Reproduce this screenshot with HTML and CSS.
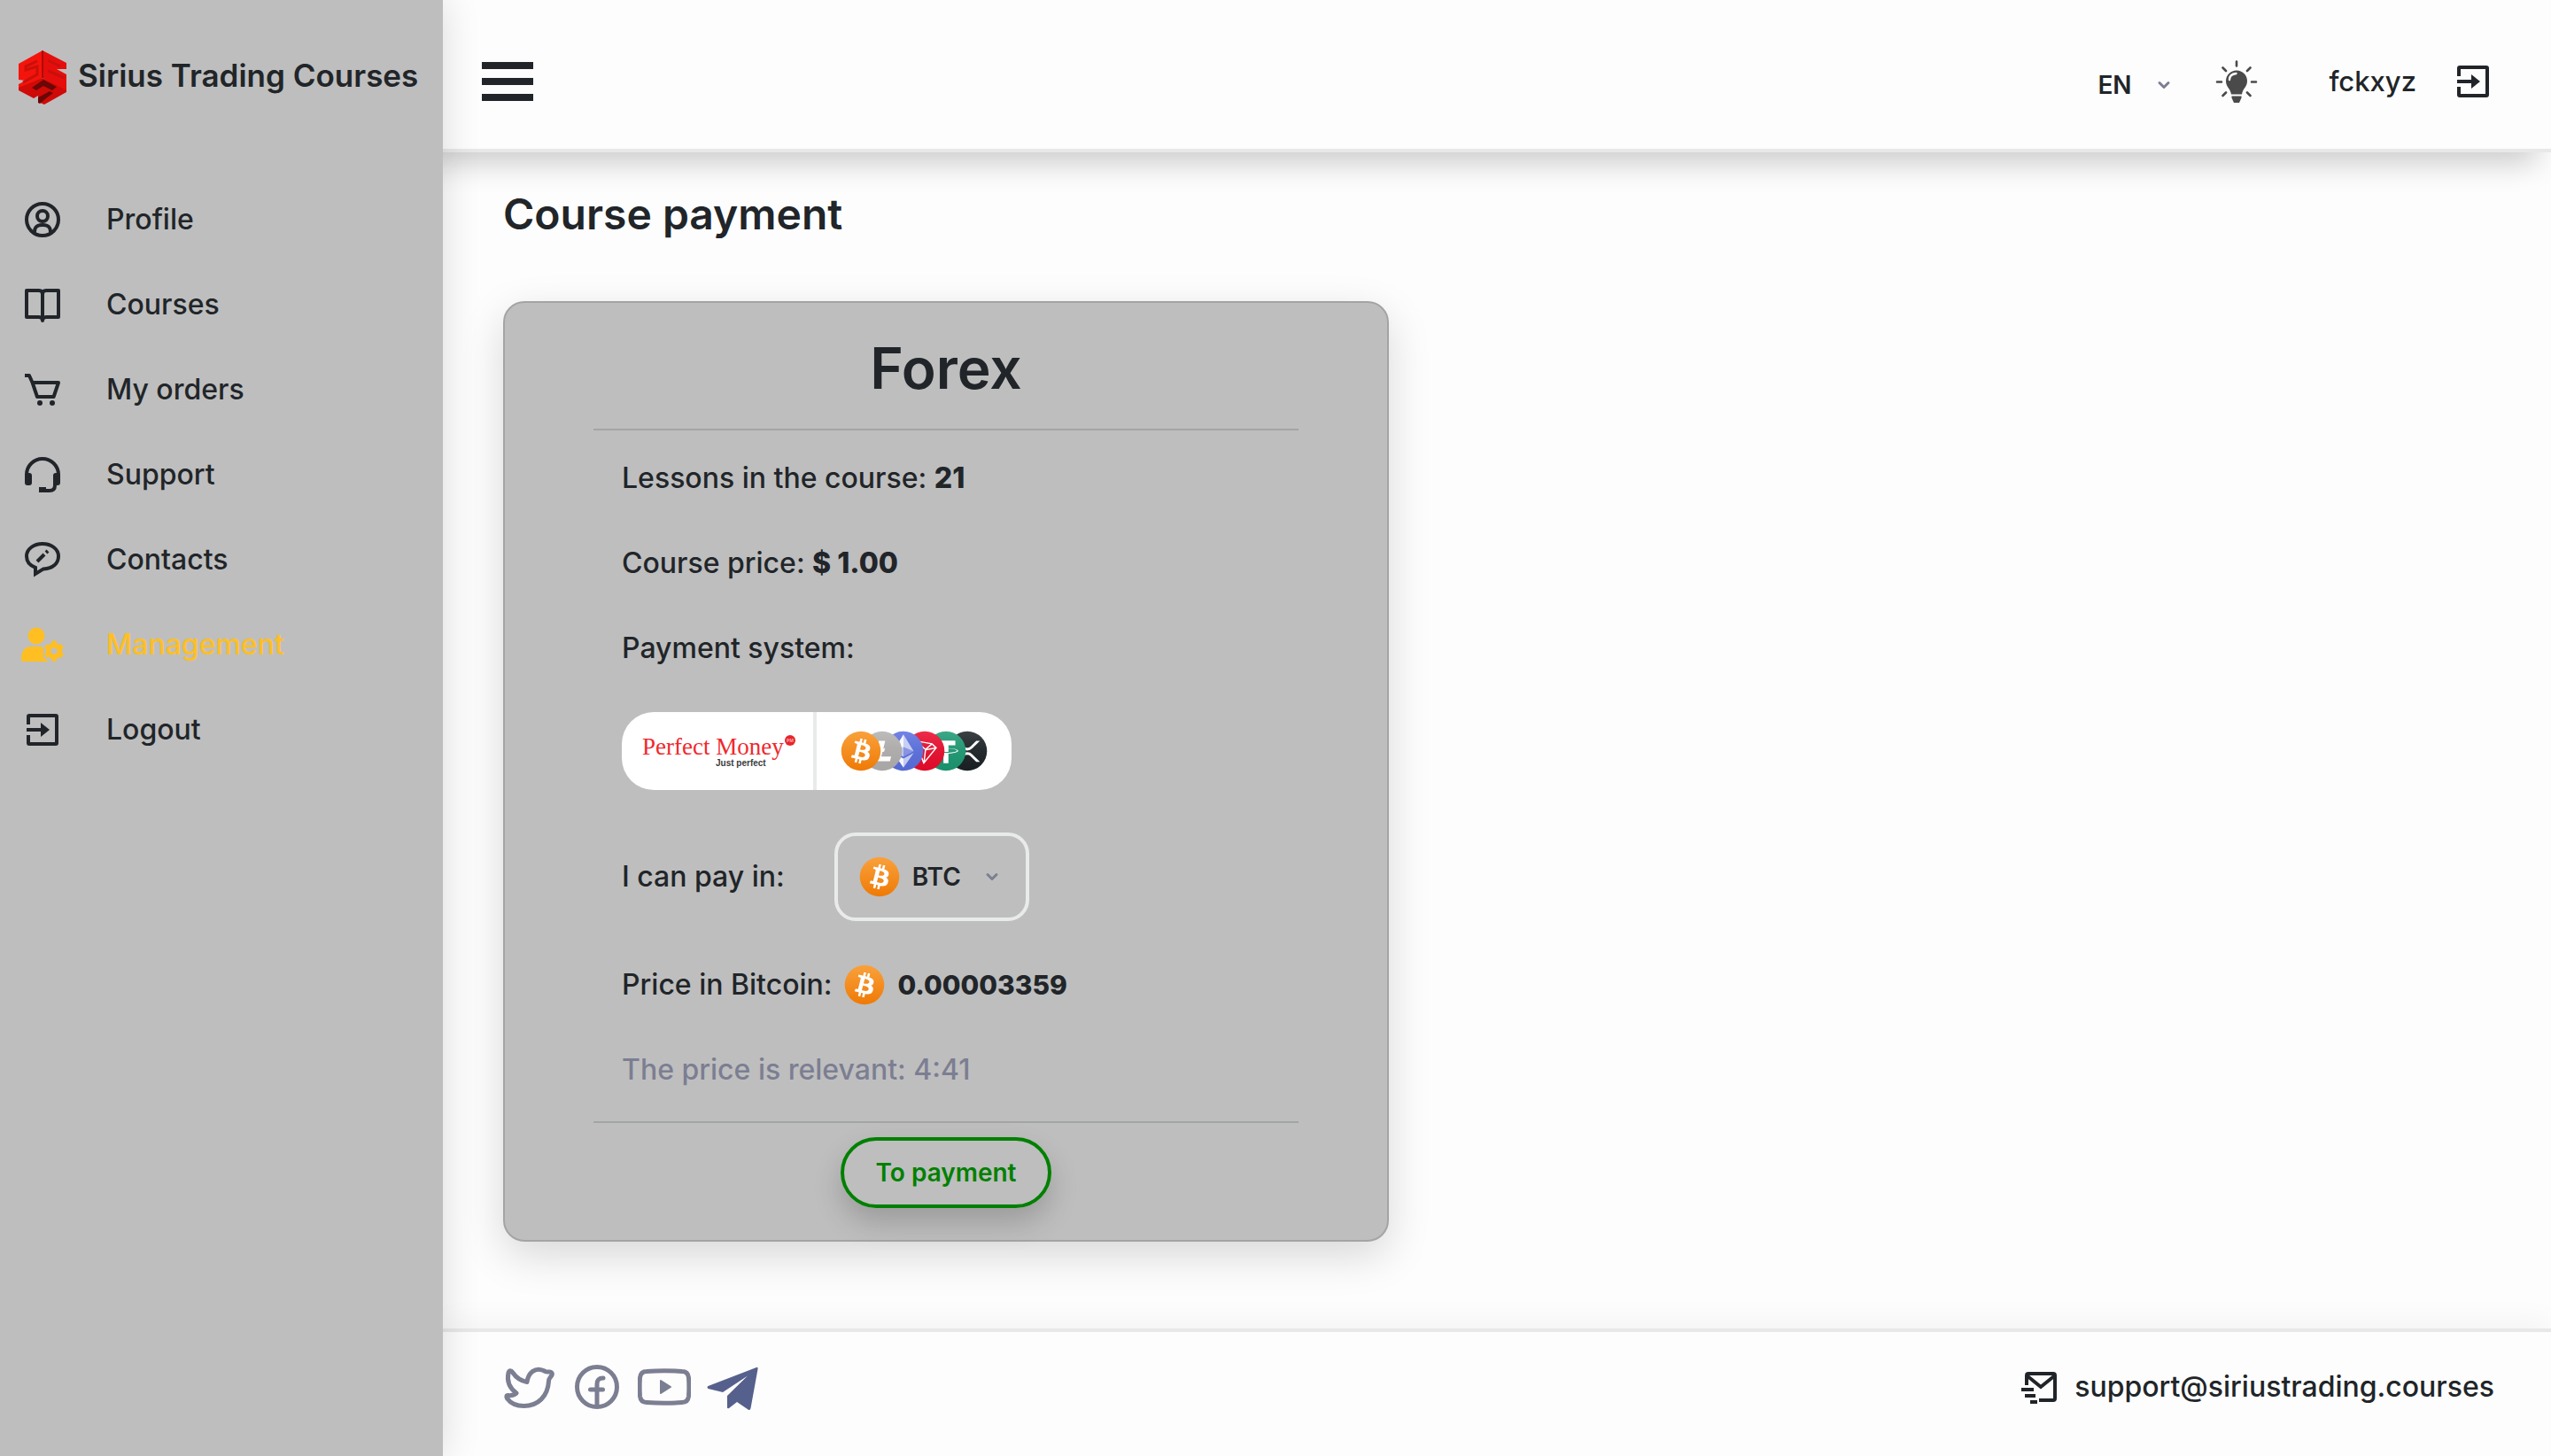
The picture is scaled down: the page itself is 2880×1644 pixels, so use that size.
FILE: index.html
```html
<!DOCTYPE html>
<html lang="en">
<head>
<meta charset="utf-8">
<title>Sirius Trading Courses</title>
<meta name="viewport" content="width=device-width, initial-scale=1">
<link rel="stylesheet" href="styles.css">
</head>
<body>
<svg class="sprite" aria-hidden="true">
  <defs>
    <linearGradient id="orange" x1="0" y1="0" x2="0" y2="1"><stop offset="0" stop-color="#f9a13c"/><stop offset="1" stop-color="#ef7a05"/></linearGradient>
    <linearGradient id="shade" x1="0" y1="0" x2="0" y2="1"><stop offset="0" stop-color="#fff" stop-opacity=".14"/><stop offset="1" stop-color="#000" stop-opacity=".06"/></linearGradient>
    <symbol id="btc" viewBox="0 0 32 32"><circle cx="16" cy="16" r="15.5" fill="url(#orange)"/><path fill="#fff" d="M23.189 14.02c.314-2.096-1.283-3.223-3.465-3.975l.708-2.84-1.728-.43-.69 2.765c-.454-.114-.92-.22-1.385-.326l.695-2.783L15.596 6l-.708 2.839c-.376-.086-.746-.17-1.104-.26l.002-.009-2.384-.595-.46 1.846s1.283.294 1.256.312c.7.175.826.638.805 1.006l-.806 3.235c.048.012.11.03.18.057l-.183-.045-1.13 4.532c-.086.212-.303.531-.793.41.018.025-1.256-.313-1.256-.313l-.858 1.978 2.25.561c.418.105.828.215 1.231.318l-.715 2.872 1.727.43.708-2.84c.472.127.93.245 1.378.357l-.706 2.828 1.728.43.715-2.866c2.948.558 5.164.333 6.097-2.333.752-2.146-.037-3.385-1.588-4.192 1.13-.26 1.98-1.003 2.207-2.538zm-3.95 5.538c-.533 2.147-4.148.986-5.32.695l.95-3.805c1.172.293 4.929.872 4.37 3.11zm.535-5.569c-.487 1.953-3.495.96-4.47.717l.86-3.45c.975.243 4.118.696 3.61 2.733z"/></symbol>
    <symbol id="exit" viewBox="0 0 24 24"><path fill="none" stroke="currentColor" stroke-width="2" d="M4 9V4.500Q4 4 4.500 4H19.500Q20 4 20 4.500V19.500Q20 20 19.500 20H4.500Q4 20 4 19.500V15"/><path fill="currentColor" d="M3 11h8V8l5 4-5 4v-3H3z"/></symbol>
    <symbol id="chevron" viewBox="0 0 16 10"><path fill="none" stroke="currentColor" stroke-width="3" stroke-linecap="round" stroke-linejoin="round" d="M3 2.500l5 5 5-5"/></symbol>
  </defs>
</svg>

<div class="app">
  <aside class="sidebar">
    <a class="brand" href="#">
      <svg class="brand-logo" viewBox="-1 0 56 62" aria-hidden="true">
        <path fill="#f4140b" d="M27 0v31L7 42l-7 0v-4l8-4-8-1V15z"/>
        <path fill="#e60e0c" d="M27 0l27 14v7l-11 0 11 6v20L27 31z"/>
        <path fill="#cf0a07" d="M27 31l27 14v2L29 61l-7-3v-7l-5 3L0 45v-3z"/>
        <path fill="none" stroke="#c9100b" stroke-width="3" d="M21 12L8 18v4l13-4v9L5 36M33 11l14 7M33 23l19 8"/>
        <path fill="#6b0705" d="M15 42l13-9 15 8-5 4-10-5-8 5zM26 51l9-5 4 2-8 6-7 6-2-1v-6z"/>
        <path stroke="#6d0906" stroke-width="1" d="M27 0v31"/>
      </svg>
      <span>Sirius Trading Courses</span>
    </a>
    <nav class="menu" aria-label="Main">
      <a href="#"><svg class="icon" viewBox="0 0 24 24" fill="none" stroke="currentColor" stroke-width="2"><circle cx="12" cy="12" r="9"/><circle cx="12" cy="10" r="3"/><path d="M7.500 19c0-3 1.500-4 4.500-4s4.500 1 4.500 4"/></svg>Profile</a>
      <a href="#"><svg class="icon" viewBox="0 0 24 24" fill="none" stroke="currentColor" stroke-width="2" stroke-linejoin="round"><path d="M3 4h7q2 0 2 2 0-2 2-2h7v15h-7q-2 0-2 2 0-2-2-2H3zM12 5v15"/></svg>Courses</a>
      <a href="#"><svg class="icon" viewBox="0 0 24 24" fill="none" stroke="currentColor" stroke-width="2" stroke-linejoin="round"><path d="M2 4h2.500l1.800 4M6.300 8H21l-2.700 8H9z"/><circle cx="10.500" cy="19.500" r="1.500" fill="currentColor" stroke="none"/><circle cx="17.500" cy="19.500" r="1.500" fill="currentColor" stroke="none"/></svg>My orders</a>
      <a href="#"><svg class="icon" viewBox="0 0 24 24" fill="none" stroke="currentColor" stroke-width="2"><path d="M3 13v-1a9 9 0 0 1 18 0v1M19 12v6q0 3-3 3h-6"/><path d="M10 20.500h4" stroke-width="3"/><rect x="2.500" y="11.500" width="3" height="6" rx="1" fill="currentColor" stroke-width="1"/><rect x="18.500" y="11.500" width="3" height="6" rx="1" fill="currentColor" stroke-width="1"/></svg>Support</a>
      <a href="#"><svg class="icon" viewBox="0 0 24 24" fill="none" stroke="currentColor" stroke-width="2"><path d="M12 3c5 0 9 3 9 7s-3 7-8.500 7.200L8 20v-3.600C5 15.300 3 13 3 10c0-4 4-7 9-7z"/><path d="M9 13l4-4M14 8l1-1"/></svg>Contacts</a>
      <a class="active" href="#"><svg class="icon" viewBox="0 0 24 24" fill="currentColor"><circle cx="8.500" cy="7" r="4.700"/><path d="M0 20.500c0-5 2-7.500 5.500-7.500h6l1 1v5l3 2.500H1q-1 0-1-1z"/><circle cx="18.500" cy="15.500" r="3.200" fill="none" stroke="currentColor" stroke-width="2.800"/><path fill="none" stroke="currentColor" stroke-width="2.600" d="M18.500 9.800v2.400M18.500 18.800v2.400M13.600 12.700l2 1.200M21.400 17.100l2 1.200M13.600 18.300l2-1.200M21.400 13.900l2-1.200"/></svg>Management</a>
      <a href="#"><svg class="icon"><use href="#exit"/></svg>Logout</a>
    </nav>
  </aside>

  <div class="page">
    <header class="topbar">
      <button class="burger" type="button" aria-label="Toggle menu"><span></span><span></span><span></span></button>
      <div class="tools">
        <div class="lang">
          <select class="plain-select" aria-label="Language"><option>EN</option></select>
          <svg class="chevron" aria-hidden="true"><use href="#chevron"/></svg>
        </div>
        <button class="theme" type="button" aria-label="Toggle theme">
          <svg viewBox="0 0 48 48" aria-hidden="true"><path fill="#4a4a4a" d="M24 11.500a12 12 0 0 1 12 12c0 7-5 8-6 15h-12C17 31.500 12 30.500 12 23.500a12 12 0 0 1 12-12z"/><path fill="none" stroke="#fdfdfd" stroke-width="2.400" stroke-linecap="round" d="M16 22c0-4 3-6.500 7.500-7"/><path fill="#4a4a4a" d="M18.500 40.500h11v2L27 48h-6l-2.500-5.500z"/><path fill="none" stroke="#4a4a4a" stroke-width="2.600" stroke-linecap="round" d="M24 1.500v5M2 24.500h5M41 24.500h5M8.500 8.500l3.500 3.500M39.500 8.500L36 12M8.500 40l3.500-3.500M39.500 40L36 36.500"/></svg>
        </button>
        <a class="user" href="#">fckxyz</a>
        <a class="exit" href="#" aria-label="Logout"><svg class="icon"><use href="#exit"/></svg></a>
      </div>
    </header>

    <main class="content">
      <h1>Course payment</h1>
      <section class="card">
        <h2>Forex</h2>
        <div class="details">
          <p>Lessons in the course: <b>21</b></p>
          <p>Course price: <b>$ 1.00</b></p>
          <p>Payment system:</p>
          <div class="systems">
            <button type="button" aria-label="Perfect Money">
              <svg class="pm" viewBox="0 0 176 48" aria-hidden="true">
                <text class="pm-name" x="3" y="28">Perfect Money</text>
                <text class="pm-tag" x="86" y="41">Just perfect</text>
                <circle cx="170" cy="12" r="6" fill="#e8242b"/>
                <text class="pm-mark" x="166" y="14">PM</text>
              </svg>
            </button>
            <button class="coins" type="button" aria-label="Cryptocurrency">
              <svg><use href="#btc"/></svg>
              <svg viewBox="0 0 32 32"><circle cx="16" cy="16" r="15.500" fill="#b3b2b0"/><circle cx="16" cy="16" r="15.500" fill="url(#shade)"/><path fill="#fff" d="M10.427 19.214L9 19.768l.688-2.759 1.444-.58L13.213 8h5.129l-1.519 6.196 1.41-.571-.68 2.750-1.427.571-.848 3.483H23L22.127 24H9.252z"/></svg>
              <svg viewBox="0 0 32 32"><circle cx="16" cy="16" r="15.500" fill="#5b70e2"/><circle cx="16" cy="16" r="15.500" fill="url(#shade)"/><path fill="#fff" fill-opacity=".65" d="M16 3v9.870l8 3.350zM16 21.968v7.027L24 17.616z"/><path fill="#fff" fill-opacity=".95" d="M16 3L8 16.220l8-3.350zM16 28.995v-7.028l-8-4.351z"/><path fill="#fff" fill-opacity=".25" d="M16 20.573l8-4.353-8-3.348z"/><path fill="#fff" fill-opacity=".6" d="M8 16.220l8 4.353v-7.701z"/></svg>
              <svg viewBox="0 0 32 32"><circle cx="16" cy="16" r="15.500" fill="#ec0c2c"/><circle cx="16" cy="16" r="15.500" fill="url(#shade)"/><path fill="#fff" d="M21.932 9.913L7.500 7.257l7.595 19.112 10.583-12.894-3.746-3.562zm-.232 1.170l2.208 2.099-6.038 1.093 3.830-3.192zm-5.142 2.973l-6.364-5.278 10.402 1.914-4.038 3.364zm-.453.934l-1.038 8.580L9.472 9.487l6.633 5.502zm.960.455l6.687-1.210-7.670 9.343.983-8.133z"/></svg>
              <svg viewBox="0 0 32 32"><circle cx="16" cy="16" r="15.500" fill="#1c9a73"/><circle cx="16" cy="16" r="15.500" fill="url(#shade)"/><path fill="#fff" d="M17.922 17.383v-.002c-.11.008-.677.042-1.942.042-1.010 0-1.721-.03-1.971-.042v.003c-3.888-.171-6.790-.848-6.790-1.658 0-.809 2.902-1.486 6.790-1.660v2.644c.254.018.982.061 1.988.061 1.207 0 1.812-.05 1.925-.06v-2.643c3.880.173 6.775.850 6.775 1.658 0 .810-2.895 1.485-6.775 1.657m0-3.590v-2.366h5.414V7.819H8.595v3.608h5.414v2.365c-4.400.202-7.709 1.074-7.709 2.118 0 1.044 3.309 1.915 7.709 2.118v7.582h3.913v-7.584c4.393-.202 7.694-1.073 7.694-2.116 0-1.043-3.301-1.914-7.694-2.117"/></svg>
              <svg viewBox="0 0 32 32"><circle cx="16" cy="16" r="15.500" fill="#1b2226"/><circle cx="16" cy="16" r="15.500" fill="url(#shade)"/><path fill="#fff" d="M23.070 8h2.890l-6.015 5.957a5.621 5.621 0 0 1-7.890 0L6.035 8H8.930l4.570 4.523a3.556 3.556 0 0 0 4.996 0L23.070 8zM8.895 24.563H6l6.055-5.993a5.621 5.621 0 0 1 7.890 0L26 24.562h-2.895L18.500 20a3.556 3.556 0 0 0-4.996 0l-4.610 4.563z"/></svg>
            </button>
          </div>
          <div class="pay-in">
            <label for="coin">I can pay in:</label>
            <div class="coin-box">
              <svg class="coin" aria-hidden="true"><use href="#btc"/></svg>
              <select class="plain-select" id="coin"><option>BTC</option></select>
              <svg class="chevron" aria-hidden="true"><use href="#chevron"/></svg>
            </div>
          </div>
          <p class="price">Price in Bitcoin: <svg class="coin" aria-hidden="true"><use href="#btc"/></svg> <b>0.00003359</b></p>
          <p class="muted">The price is relevant: 4:41</p>
        </div>
        <button class="pay" type="button">To payment</button>
      </section>
    </main>

    <footer class="footer">
      <div class="social">
        <a href="#" aria-label="Twitter"><svg viewBox="0 0 60 60" fill="none" stroke="currentColor" stroke-width="5" stroke-linejoin="round"><path d="M27 25.500C20 24 15 21 11 15c-2-3-4-3-5 0-2 9 1 17 9 23-3 2.500-6 3-9.500 2.500-2 0-2 2-1 3.500 4 5.500 10 8.500 19 8.500 16 0 27-11 28-28 0-3 1-3 3-6 2-3 0-5-3-4.500-3 .500-3 0-6-1.500-9-4-17 2-18.500 13z" transform="translate(0 -1)"/></svg></a>
        <a href="#" aria-label="Facebook"><svg viewBox="0 0 60 60" fill="none" stroke="currentColor" stroke-width="5" stroke-linecap="round"><circle cx="30" cy="30" r="22.500"/><path d="M30 51V27c0-5 2-7 7-7M22.500 33h14"/></svg></a>
        <a href="#" aria-label="YouTube"><svg viewBox="0 0 60 60" fill="none" stroke="currentColor" stroke-width="5"><path d="M10 12.500c13-1 27-1 40 0 5 0 7 3 7.500 7 .500 7 .500 14 0 21-.500 4-2.500 7-7.500 7-13 1-27 1-40 0-5 0-7-3-7.500-7-.500-7-.500-14 0-21 .500-4 2.500-7 7.500-7z"/><path fill="currentColor" stroke-width="2" stroke-linejoin="round" d="M26 23l11 7-11 7z"/></svg></a>
        <a class="telegram" href="#" aria-label="Telegram"><svg viewBox="0 0 60 60" fill="currentColor"><path d="M58 8q2-1 1.500 2l-8 44q-.500 3-3 1.500L36 47l-9 7q-2 1-2-1V40l23-22.500L20 36 3.500 32q-2-1.500 0-3z"/></svg></a>
      </div>
      <a class="mail" href="mailto:support@siriustrading.courses">
        <svg class="icon" viewBox="0 0 24 24" fill="none" stroke="currentColor" stroke-width="2"><path d="M5 11V5.500Q5 4.500 6 4.500H20Q21 4.500 21 5.500V18.500Q21 19.500 20 19.500H12M5 5.500l8 6.500 8-6.500M2 13.500h7M4 17h6M7 20.500h4"/></svg>
        <span>support@siriustrading.courses</span>
      </a>
    </footer>
  </div>
</div>
</body>
</html>
```
FILE: styles.css
```css
* {
  box-sizing: border-box;
}

body {
  margin: 0;
  font-family: Inter, "Liberation Sans", sans-serif;
  font-size: 32px;
  font-weight: 500;
  line-height: 48px;
  color: #212529;
  background: #fdfdfd;
}

a {
  color: inherit;
  text-decoration: none;
}

button,
select {
  padding: 0;
  border: 0;
  font: inherit;
  color: inherit;
  background: none;
  cursor: pointer;
}

svg {
  display: block;
  flex: none;
}

.sprite {
  position: absolute;
  width: 0;
  height: 0;
}

.icon {
  width: 48px;
  height: 48px;
}

.app {
  display: grid;
  grid-template-columns: 500px 1fr;
  min-height: 100vh;
}

/* Sidebar */
.sidebar {
  position: relative;
  z-index: 1;
  background: #bebebe;
  box-shadow: 0 0 40px rgba(0, 0, 0, 0.14);
}

.brand {
  display: flex;
  gap: 12px;
  padding: 56px 20px 0;
  font-size: 35px;
  font-weight: 600;
  line-height: 58px;
  white-space: nowrap;
}

.brand-logo {
  width: 56px;
  height: 64px;
}

.menu {
  display: grid;
  gap: 48px;
  padding: 104px 24px 48px;
}

.menu a {
  display: flex;
  align-items: center;
  gap: 48px;
}

.menu .active {
  color: #ffbf23;
}

/* Header: it runs under the sidebar so its shadow starts at the edge */
.page {
  display: flex;
  flex-direction: column;
}

.topbar {
  display: flex;
  justify-content: space-between;
  align-items: center;
  height: 172px;
  margin-left: -40px;
  padding: 16px 64px 0 84px;
  border-bottom: 4px solid #e8e8e8;
  box-shadow: 0 28px 32px -16px rgba(0, 0, 0, 0.2);
}

.burger {
  display: grid;
  gap: 10px;
  width: 58px;
}

.burger span {
  height: 8px;
  background: #212529;
}

.tools {
  display: flex;
  align-items: center;
}

.lang {
  display: flex;
  align-items: center;
  gap: 28px;
  padding-top: 8px;
}

.plain-select {
  appearance: none;
  font-size: 28px;
  font-weight: 600;
}

.chevron {
  width: 16px;
  height: 10px;
  color: #7c7e92;
}

.theme {
  margin: 0 80px 0 50px;
}

.theme svg {
  width: 48px;
  height: 48px;
}

.exit {
  margin-left: 40px;
}

.user {
  font-size: 31px;
}

/* Content */
.content {
  flex: 1;
  padding: 38px 68px 96px;
}

h1 {
  margin: 0;
  font-size: 48px;
  font-weight: 600;
  line-height: 64px;
}

.card {
  display: flex;
  flex-direction: column;
  align-items: center;
  max-width: 1000px;
  margin-top: 66px;
  padding: 34px 100px 36px;
  border: 2px solid #a3a4a4;
  border-radius: 24px;
  background: #bebebe;
  box-shadow: 0 16px 48px rgba(0, 0, 0, 0.15);
}

h2 {
  margin: 0 0 28px;
  font-size: 64px;
  font-weight: 600;
  line-height: 80px;
}

.details {
  display: grid;
  gap: 48px;
  width: 100%;
  padding: 30px 32px 34px;
  border-top: 2px solid #a3a4a4;
  border-bottom: 2px solid #a3a4a4;
}

.details p {
  margin: 0;
}

.details b {
  font-weight: 800;
}

.systems {
  display: flex;
  justify-self: start;
  border-radius: 36px;
  background: #fff;
  overflow: hidden;
}

.systems button {
  display: flex;
  align-items: center;
  justify-content: center;
  width: 216px;
  height: 88px;
}

.systems .coins {
  width: 224px;
  border-left: 4px solid #e9ebeb;
}

.pm {
  width: 176px;
  height: 48px;
  overflow: visible;
}

.pm-name {
  font: 27px "Liberation Serif", serif;
  fill: #f0282d;
}

.pm-tag {
  font: bold 10px "Liberation Sans", sans-serif;
  fill: #3b3b3b;
}

.pm-mark {
  font: bold 5px "Open Sans", sans-serif;
  fill: #ffb0b0;
}

.coins svg {
  position: relative;
  width: 46px;
  height: 46px;
}

.coins svg + svg {
  margin-left: -22px;
}

.coins svg:nth-child(1) { z-index: 6; }
.coins svg:nth-child(2) { z-index: 5; }
.coins svg:nth-child(3) { z-index: 4; }
.coins svg:nth-child(4) { z-index: 3; }
.coins svg:nth-child(5) { z-index: 2; }

.coin {
  width: 46px;
  height: 46px;
}

.pay-in {
  display: flex;
  align-items: center;
  gap: 56px;
}

.coin-box {
  display: flex;
  align-items: center;
  gap: 14px;
  width: 220px;
  height: 100px;
  padding: 0 30px 0 24px;
  border: 4px solid #e9ebeb;
  border-radius: 24px;
}

.coin-box .chevron {
  margin-left: auto;
}

.price {
  display: flex;
  align-items: center;
  gap: 14px;
}

.details .price b {
  font-size: 30px;
}

.muted {
  color: #7c7e92;
}

.pay {
  margin-top: 16px;
  padding: 12px 35px;
  border: 4px solid #008000;
  border-radius: 40px;
  font-size: 28px;
  font-weight: 600;
  color: #008000;
  box-shadow: 0 16px 32px rgba(0, 0, 0, 0.18);
}

/* Footer */
.footer {
  display: flex;
  justify-content: space-between;
  align-items: center;
  min-height: 144px;
  padding: 0 64px 16px 68px;
  border-top: 4px solid #e8e8e8;
  box-shadow: 0 -10px 30px rgba(0, 0, 0, 0.04);
}

.social {
  display: flex;
  gap: 16px;
  color: #7c7e92;
}

.social svg {
  width: 60px;
  height: 60px;
}

.telegram {
  color: #55608c;
}

.mail {
  display: flex;
  align-items: center;
  gap: 16px;
}
```
